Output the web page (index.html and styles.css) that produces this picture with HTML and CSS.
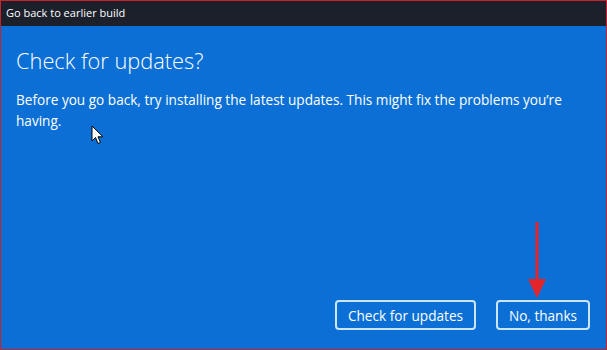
FILE: index.html
```html
<!DOCTYPE html>
<html lang="en">
<head>
<meta charset="utf-8">
<title>Go back to earlier build</title>
<link rel="stylesheet" href="styles.css">
</head>
<body>
<div class="window">
  <div class="titlebar">Go back to earlier build</div>
  <div class="content">
    <h1 class="heading">Check for updates?</h1>
    <p class="body-text">Before you go back, try installing the latest updates. This might fix the problems you’re having.</p>
    <div class="actions">
      <button class="btn btn-wide">Check for updates</button>
      <button class="btn btn-narrow">No, thanks</button>
    </div>
  </div>
  <svg class="cursor" width="14" height="20" viewBox="0 0 14 20">
    <path d="M1 1 L1 16 L4.5 12.5 L7 18.5 L9.5 17.5 L7 11.8 L12 11.8 Z" fill="#fff" stroke="#000" stroke-width="1" stroke-linejoin="round"/>
  </svg>
  <svg class="arrow" width="24" height="80" viewBox="0 0 24 80">
    <line x1="12" y1="0" x2="12" y2="60" stroke="#e3262b" stroke-width="3"/>
    <polygon points="3,57 21,57 12,76" fill="#e3262b"/>
  </svg>
</div>
</body>
</html>
```

FILE: styles.css
```css
* { box-sizing: border-box; }
html, body {
  margin: 0;
  padding: 0;
  width: 607px;
  height: 350px;
  overflow: hidden;
  background: #0b6fd5;
}
.window {
  position: relative;
  width: 607px;
  height: 350px;
  border: 1px solid #c4232c;
  display: flex;
  flex-direction: column;
  background: #0b6fd5;
  font-family: "Open Sans", "Noto Sans", sans-serif;
  color: #fff;
}
.titlebar {
  height: 25px;
  background: #1c202b;
  color: #fff;
  font-size: 11px;
  line-height: 24px;
  padding-left: 5px;
  flex: none;
}
.content {
  flex: 1;
  display: flex;
  flex-direction: column;
  padding: 20px 16px 19px 15px;
}
.heading {
  margin: 0;
  font-size: 21.8px;
  font-weight: 300;
  line-height: 30px;
}
.body-text {
  margin: 13px 0 0;
  font-size: 13.6px;
  line-height: 21px;
  font-weight: 400;
}
.actions {
  margin-top: auto;
  display: flex;
  justify-content: flex-end;
  gap: 20px;
}
.btn {
  height: 30px;
  border: 2px solid #cde6ff;
  border-radius: 4px;
  background: #0b6fd5;
  color: #fff;
  font-family: "Open Sans", "Noto Sans", sans-serif;
  font-size: 13.6px;
  padding: 0;
}
.btn-wide { width: 141px; }
.btn-narrow { width: 94px; }
.cursor {
  position: absolute;
  left: 90px;
  top: 124px;
}
.arrow {
  position: absolute;
  left: 524px;
  top: 221px;
}
```
